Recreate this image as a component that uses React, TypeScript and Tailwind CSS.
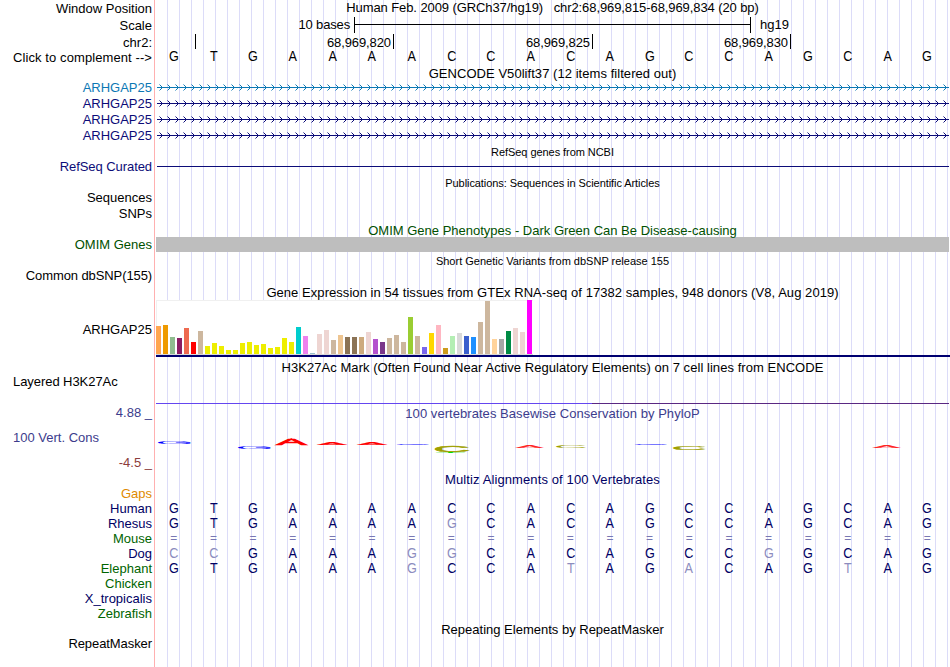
import type { ReactNode } from "react";
import clsx from "clsx";

type Label = { text: string; className: string };

const LABELS: Label[] = [
  { text: "Window Position", className: "h-[17px]" },
  { text: "Scale", className: "h-[17px]" },
  { text: "chr2:", className: "h-[15px]" },
  { text: "Click to complement -->", className: "h-[30px] tracking-[0.09px]" },
  { text: "ARHGAP25", className: "h-4 text-[#0c78b4]" },
  { text: "ARHGAP25", className: "h-4 text-[#0c0c78]" },
  { text: "ARHGAP25", className: "h-4 text-[#0c0c78]" },
  { text: "ARHGAP25", className: "h-[31px] text-[#0c0c78]" },
  { text: "RefSeq Curated", className: "h-[31px] text-[#0c0c78] tracking-[-0.07px]" },
  { text: "Sequences", className: "h-4" },
  { text: "SNPs", className: "h-[31px]" },
  { text: "OMIM Genes", className: "h-[31px] text-[#005000]" },
  { text: "Common dbSNP(155)", className: "h-[54px] tracking-[-0.1px]" },
  { text: "ARHGAP25", className: "h-[52px]" },
  { text: "Layered H3K27Ac", className: "h-[31px] self-start ml-[13px] tracking-[-0.06px]" },
  { text: "4.88 _", className: "h-[25px] text-[#3c3c8c]" },
  { text: "100 Vert. Cons", className: "h-[25px] self-start ml-[13px] text-[#3c3c8c]" },
  { text: "-4.5 _", className: "h-[31px] text-[#8c3c3c]" },
  { text: "Gaps", className: "h-[15px] text-[#e08a00]" },
  { text: "Human", className: "h-[15px] text-[#000064]" },
  { text: "Rhesus", className: "h-[15px] text-[#000064]" },
  { text: "Mouse", className: "h-[15px] text-[#006400]" },
  { text: "Dog", className: "h-[15px] text-[#000064]" },
  { text: "Elephant", className: "h-[15px] text-[#006400]" },
  { text: "Chicken", className: "h-[15px] text-[#006400]" },
  { text: "X_tropicalis", className: "h-[15px] text-[#000064]" },
  { text: "Zebrafish", className: "h-[30px] text-[#006400]" },
  { text: "RepeatMasker", className: "h-4 tracking-[-0.08px]" },
];

const REFERENCE = "GTGAAAACCACAGCCAGCAG";

// lower case marks a base that differs from the reference
const ALIGNMENTS = [
  "GTGAAAACCACAGCCAGCAG",
  "GTGAAAAgCACAGCCAGCAG",
  "====================",
  "ccGAAAggCACAGCCgGCAG",
  "GTGAAAgCCAtAGaCAGtAG",
];

// [height, colour] for each GTEx tissue
const TISSUES: [number, string][] = [
  [28, "#ffa54f"], [29, "#ee9a00"], [17, "#8fbc8f"], [16, "#8b1c62"], [26, "#ee6a50"],
  [12, "#ff0000"], [23, "#cdb79e"], [8, "#eeee00"], [11, "#eeee00"], [8, "#eeee00"],
  [4, "#eeee00"], [4, "#eeee00"], [11, "#eeee00"], [12, "#eeee00"], [9, "#eeee00"],
  [10, "#eeee00"], [6, "#eeee00"], [7, "#eeee00"], [16, "#eeee00"], [12, "#eeee00"],
  [27, "#00cdcd"], [18, "#ee82ee"], [1, "#9ac0cd"], [20, "#eed5d2"], [24, "#eed5d2"],
  [14, "#cdb79e"], [19, "#eec591"], [17, "#8b7355"], [17, "#8b7355"], [17, "#cdaa7d"],
  [22, "#eed5d2"], [15, "#b452cd"], [12, "#7a378b"], [16, "#cdb79e"], [19, "#cdb79e"],
  [12, "#cdb79e"], [37, "#9acd32"], [18, "#cdb79e"], [7, "#7a67ee"], [21, "#ffd700"],
  [29, "#ffb6c1"], [6, "#cd9b1d"], [18, "#b4eeb4"], [21, "#d9d9d9"], [18, "#3a5fcd"],
  [17, "#1e90ff"], [32, "#cdb79e"], [53, "#cdb79e"], [15, "#ffd39b"], [15, "#a6a6a6"],
  [23, "#008b45"], [26, "#eed5d2"], [22, "#eed5d2"], [54, "#ff00ff"],
];

type Mark = {
  base: "A" | "C" | "G" | "T";
  x: number;
  y: number;
  w: number;
  h: number;
  weight?: number;
  fade?: number;
};

const MARKS: Mark[] = [
  { base: "G", x: 3, y: 19, w: 33, h: 3 },
  { base: "G", x: 83, y: 24, w: 33, h: 3 },
  { base: "A", x: 121.5, y: 16, w: 30, h: 6.8, weight: 2.5 },
  { base: "A", x: 162, y: 20, w: 30, h: 2.8, weight: 1 },
  { base: "A", x: 202, y: 20, w: 30, h: 2.8, weight: 1 },
  { base: "G", x: 242, y: 22, w: 32, h: 1 },
  { base: "C", x: 281, y: 24, w: 32, h: 6.3, weight: 2 },
  { base: "T", x: 281, y: 30, w: 29, h: 1 },
  { base: "A", x: 360, y: 24, w: 29, h: 1.9, fade: 0.85 },
  { base: "C", x: 401, y: 24, w: 30, h: 2 },
  { base: "G", x: 480, y: 22, w: 32, h: 1 },
  { base: "C", x: 519, y: 24, w: 31, h: 4, weight: 1.5 },
  { base: "A", x: 717, y: 24, w: 29, h: 1.9, fade: 0.85 },
];

// ink box of each capital, in em
const INK = {
  A: { left: 0, width: 0.667, height: 0.688, drop: 0, fill: "#ff0000" },
  C: { left: 0.05, width: 0.637, height: 0.698, drop: 0.01, fill: "#a0a000" },
  G: { left: 0.05, width: 0.665, height: 0.698, drop: 0.01, fill: "#0000ff" },
  T: { left: 0.02, width: 0.568, height: 0.688, drop: 0, fill: "#00e000" },
};

function Title({ children, className }: { children: ReactNode; className?: string }) {
  return (
    <div className={clsx("text-center leading-4 whitespace-pre", className)}>{children}</div>
  );
}

function Bases({ row, className }: { row: string; className?: string }) {
  return (
    <div className={clsx("-ml-px grid h-[15px] w-[793px] grid-cols-20 text-center", className)}>
      {row.split("").map((base, i) => (
        <span
          key={i}
          className={clsx(
            base === "=" ? "pt-[2px] text-[12px] leading-[13px] text-[#7878b4]" : "scale-x-90 text-[14px] leading-4",
            base !== base.toUpperCase() && "text-[#8c8cbe]",
          )}
        >
          {base.toUpperCase()}
        </span>
      ))}
    </div>
  );
}

function GeneLine({ index, color }: { index: number; color: string }) {
  const id = `strand-${index}`;
  return (
    <svg className="ml-0.5 block h-4 w-[792px]" viewBox="0 0 792 16" stroke={color} fill="none">
      <defs>
        <pattern id={id} width="8" height="16" patternUnits="userSpaceOnUse">
          <path d="M2.5 4.5l3 3l-3 3" />
        </pattern>
      </defs>
      <rect width="792" height="16" fill={`url(#${id})`} stroke="none" />
      <path d="M0 7.5h792" shapeRendering="crispEdges" />
    </svg>
  );
}

function Conservation() {
  return (
    <svg className="block h-[48px] w-[795px]" viewBox="0 0 795 48">
      {MARKS.map(({ base, x, y, w, h, weight = 0, fade }, i) => {
        const ink = INK[base];
        const sx = w / (ink.width * 40);
        const sy = h / ((ink.height + ink.drop * 2) * 40);
        return (
          <text
            key={i}
            fontSize="40"
            fill={ink.fill}
            stroke={ink.fill}
            strokeWidth={weight}
            opacity={fade}
            transform={`translate(${x - ink.left * 40 * sx} ${y + h - 2 - ink.drop * 40 * sy}) scale(${sx} ${sy})`}
          >
            {base}
          </text>
        );
      })}
    </svg>
  );
}

function Expression() {
  return (
    <div className="ml-px h-[57px] border-b-2 border-[#000070]">
      <div className="flex h-[55px] w-[377px] items-end gap-0.5 border-b border-[#d8d8d8] bg-white shadow-[inset_1px_1px_0_#f0f0f0]">
        {TISSUES.map(([height, color], i) => (
          <div key={i} className="w-[5px] shrink-0" style={{ height, backgroundColor: color }} />
        ))}
      </div>
    </div>
  );
}

export default function App() {
  return (
    <div className="flex h-[667px] w-[950px] overflow-hidden bg-white font-['Liberation_Sans',Arial,sans-serif] text-[13px] leading-4 text-black">
      <div className="flex w-[154px] shrink-0 flex-col items-end pt-px pr-[2px] whitespace-nowrap">
        {LABELS.map(({ text, className }, i) => (
          <div key={i} className={clsx("shrink-0", className)}>
            {text}
          </div>
        ))}
      </div>

      <div className="w-[796px] shrink-0 border-l border-[#ffb0b0] bg-[repeating-linear-gradient(90deg,transparent_0_11px,#dcdcf8_11px_12px)] bg-[position:1px_0] bg-no-repeat">
        <Title className="h-[17px] tracking-[-0.09px]">{"Human Feb. 2009 (GRCh37/hg19)   chr2:68,969,815-68,969,834 (20 bp)"}</Title>

        <div className="flex h-[17px]">
          <span className="w-[199px] pr-1 text-right tracking-[-0.15px]">10 bases</span>
          <div className="flex h-4 w-[397px] items-center border-x border-black">
            <div className="mb-px h-px w-full bg-black" />
          </div>
          <span className="pl-[9px]">hg19</span>
        </div>

        <div className="flex h-[15px] text-right leading-[17px] tracking-[-0.1px]">
          <span className="w-[41px] border-r border-black" />
          <span className="w-[198px] border-r border-black pr-0.5">68,969,820</span>
          <span className="w-[199px] border-r border-black pr-0.5">68,969,825</span>
          <span className="w-[198px] border-r border-black pr-0.5">68,969,830</span>
        </div>
        <Bases row={REFERENCE} className="-mt-px" />

        <Title className="mt-[3px] h-[14px] tracking-[0.05px]">GENCODE V50lift37 (12 items filtered out)</Title>
        {["#0c78b4", "#0c0c78", "#0c0c78", "#0c0c78"].map((color, i) => (
          <GeneLine key={i} index={i} color={color} />
        ))}

        <Title className="h-4 text-[11px] tracking-[-0.06px]">RefSeq genes from NCBI</Title>
        <div className="h-[15px] pt-1.5 pr-px pl-0.5">
          <div className="h-px bg-[#0c0c78]" />
        </div>

        <Title className="h-12 text-[11px] tracking-[-0.07px]">Publications: Sequences in Scientific Articles</Title>

        <Title className="h-[14px] text-[#005000]">OMIM Gene Phenotypes - Dark Green Can Be Disease-causing</Title>
        <div className="mr-px ml-px h-[15px] bg-[#bebebe]" />

        <Title className="h-[33px] pt-px text-[11px]">Short Genetic Variants from dbSNP release 155</Title>

        <Title className="h-[15px] tracking-[0.055px]">Gene Expression in 54 tissues from GTEx RNA-seq of 17382 samples, 948 donors (V8, Aug 2019)</Title>
        <Expression />

        <Title className="mt-[3px] h-[43px] tracking-[0.05px]">H3K27Ac Mark (Often Found Near Active Regulatory Elements) on 7 cell lines from ENCODE</Title>
        <div className="mr-px ml-px flex h-[3px]">
          <div className="h-px w-[436px] bg-[#6446f0]" />
          <div className="h-px flex-1 bg-[#5a2882]" />
        </div>

        <Title className="h-[18px] tracking-[0.05px] text-[#3c3c8c]">100 vertebrates Basewise Conservation by PhyloP</Title>
        <Conservation />
        <Title className="h-[28px] tracking-[0.11px] text-[#000064]">Multiz Alignments of 100 Vertebrates</Title>

        {ALIGNMENTS.map((row, i) => (
          <Bases key={i} row={row} className="text-[#000064]" />
        ))}

        <Title className="mt-[47px]">Repeating Elements by RepeatMasker</Title>
      </div>
    </div>
  );
}
